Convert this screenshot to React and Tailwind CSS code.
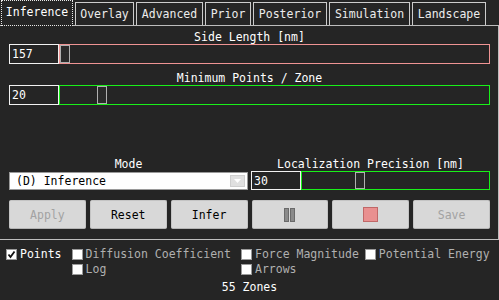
import React from 'react'

const font = { fontFamily: '"DejaVu Sans Mono", "Liberation Mono", monospace' }

const TABS = [
  { label: 'Inference', w: 'w-[72px]', active: true },
  { label: 'Overlay', w: 'w-[59px]' },
  { label: 'Advanced', w: 'w-[67px]' },
  { label: 'Prior', w: 'w-[46px]' },
  { label: 'Posterior', w: 'w-[74px]' },
  { label: 'Simulation', w: 'w-[81px]' },
  { label: 'Landscape', w: 'w-[74px]' },
]

function Tab({ label, w, active }) {
  if (active) {
    return (
      <div
        className={`${w} h-[26px] -mb-px relative z-10 flex items-center justify-center border border-dotted border-[#e8e8e8] bg-[#252525] text-white pb-[2px]`}
      >
        {label}
      </div>
    )
  }
  return (
    <div
      className={`${w} h-[23px] flex items-center justify-center border border-b-0 border-[#cccccc] text-[#ececec]`}
    >
      {label}
    </div>
  )
}

function SliderRow({ value, thumbLeft, color, inputW = 'w-[50px]', h = 'h-[20px]' }) {
  return (
    <div className={`flex ${h}`}>
      <div className={`${inputW} shrink-0 border border-[#f2f2f2] flex items-center pl-[2px] text-white`}>
        {value}
      </div>
      <div className={`flex-1 border ${color} relative`}>
        <div
          className="absolute top-0 bottom-0 w-[10px] border border-[#b0b0b0] bg-[#2a2a2a]"
          style={{ left: thumbLeft }}
        />
      </div>
    </div>
  )
}

function Checkbox({ checked }) {
  return (
    <span className="w-[11px] h-[11px] shrink-0 bg-white border border-[#9a9a9a] flex items-center justify-center">
      {checked && (
        <svg width="9" height="9" viewBox="0 0 9 9">
          <path d="M1.5 4.5 L3.5 7 L7.5 1.5" fill="none" stroke="#111" strokeWidth="1.8" />
        </svg>
      )}
    </span>
  )
}

function Check({ label, checked, light }) {
  return (
    <div className="flex items-center gap-[3px] h-[15px]">
      <Checkbox checked={checked} />
      <span className={light ? 'text-white' : 'text-[#b0b0b0]'}>{label}</span>
    </div>
  )
}

function Btn({ children, disabled }) {
  return (
    <div
      className={`h-[29px] rounded-[2px] bg-[#d8d8d8] border border-[#c4c4c4] border-b-[#b4b4b4] flex items-center justify-center ${
        disabled ? 'text-[#a2a2a2]' : 'text-black'
      }`}
    >
      {children}
    </div>
  )
}

export default function App() {
  return (
    <div className="w-[499px] h-[300px] bg-[#252525] text-[11.5px] leading-[14px] overflow-hidden" style={font}>
      {/* tabs */}
      <div className="h-[25px] flex items-end gap-[2px] pl-[1px]">
        {TABS.map((t) => (
          <Tab key={t.label} {...t} />
        ))}
      </div>

      {/* panel */}
      <div className="h-[215px] border-t border-b border-r border-[#bdbdbd] pl-[9px] pr-[8px] flex flex-col">
        <div className="mt-[4px] h-[14px] text-center text-white">Side Length [nm]</div>
        <SliderRow value="157" thumbLeft={0} color="border-[#f09494]" />

        <div className="mt-[7px] h-[14px] text-center text-white">Minimum Points / Zone</div>
        <SliderRow value="20" thumbLeft={37} color="border-[#19f019]" />

        <div className="mt-[52px] grid grid-cols-2 gap-[3px]">
          <div className="flex flex-col">
            <div className="h-[14px] text-center text-white">Mode</div>
            <div className="mt-[1px] h-[18px] bg-white border border-[#9a9a9a] flex items-center pl-[6px] text-black relative">
              (D) Inference
              <div className="absolute right-[2px] top-[2px] bottom-[2px] w-[15px] bg-[#e0e0e0] border border-[#cfcfcf] flex items-center justify-center">
                <svg width="7" height="4" viewBox="0 0 7 4">
                  <path d="M0 0 L7 0 L3.5 4 Z" fill="#ffffff" />
                </svg>
              </div>
            </div>
          </div>
          <div className="flex flex-col">
            <div className="h-[14px] text-center text-white">Localization Precision [nm]</div>
            <SliderRow value="30" thumbLeft={53} color="border-[#19f019]" h="h-[19px]" />
          </div>
        </div>

        <div className="mt-[10px] grid grid-cols-6 gap-[4px]">
          <Btn disabled>Apply</Btn>
          <Btn>Reset</Btn>
          <Btn>Infer</Btn>
          <Btn>
            <div className="flex gap-[1px]">
              <span className="w-[5px] h-[14px] bg-[#8a8a8a] border border-[#6a6a6a]" />
              <span className="w-[5px] h-[14px] bg-[#8a8a8a] border border-[#6a6a6a]" />
            </div>
          </Btn>
          <Btn>
            <span className="w-[15px] h-[15px] bg-[#e99090] border border-[#c06868]" />
          </Btn>
          <Btn disabled>Save</Btn>
        </div>
      </div>

      {/* bottom */}
      <div className="mt-[7px] flex leading-[15px]">
        <div className="ml-[6px]">
          <Check label="Points" checked light />
        </div>
        <div className="ml-[10px] flex flex-col">
          <Check label="Diffusion Coefficient" />
          <Check label="Log" />
        </div>
        <div className="ml-[10px] flex flex-col">
          <Check label="Force Magnitude" />
          <Check label="Arrows" />
        </div>
        <div className="ml-[6px]">
          <Check label="Potential Energy" />
        </div>
      </div>
      <div className="mt-[3px] text-center text-white leading-[15px]">55 Zones</div>
    </div>
  )
}
